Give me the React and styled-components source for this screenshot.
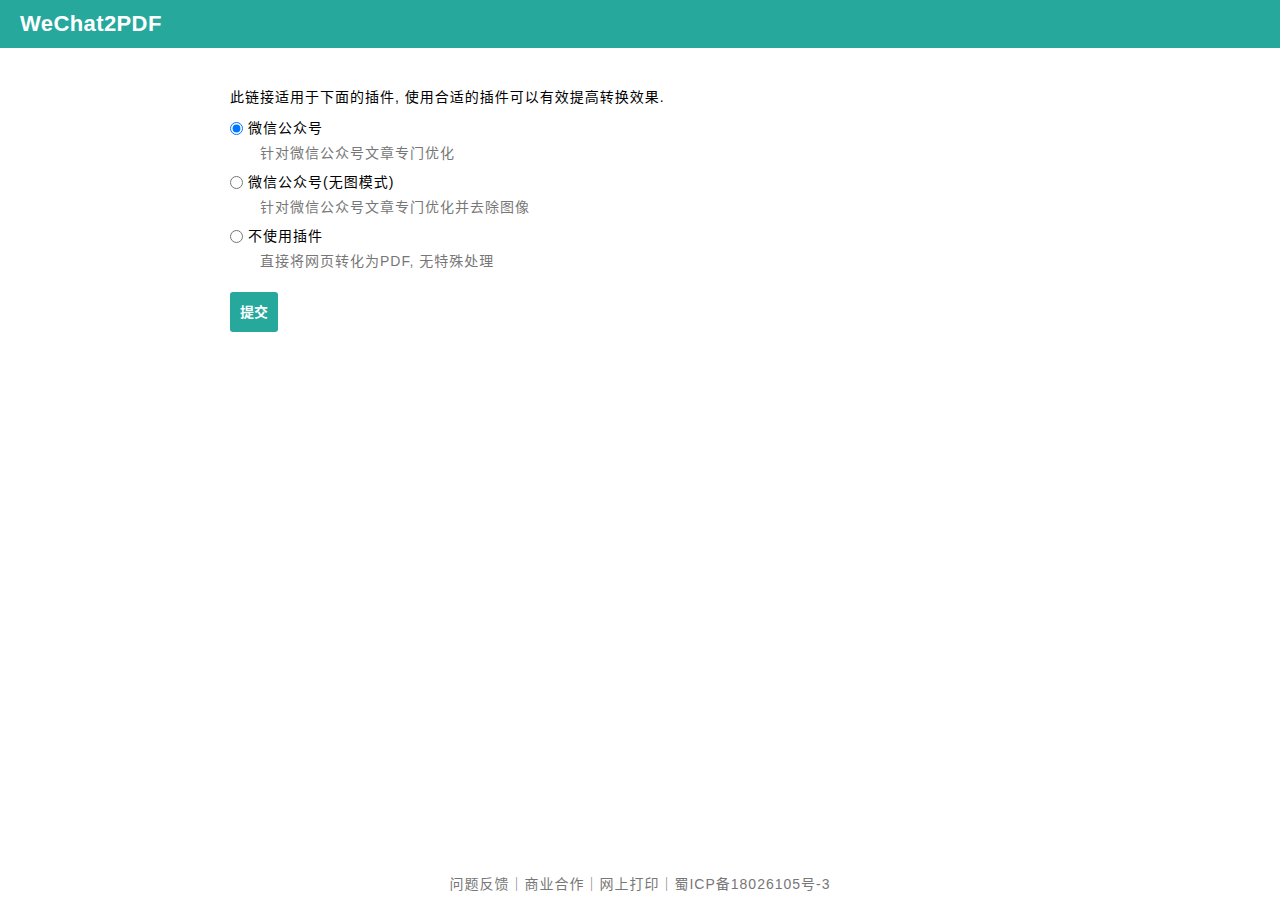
import { useState } from "react";
import styled, { createGlobalStyle } from "styled-components";

const GlobalStyle = createGlobalStyle`
    html, body {
        margin: 0;
        padding: 0;
        background: #fff;
    }
    body {
        font-family: "Liberation Sans", "Noto Sans CJK SC", sans-serif;
        font-size: 14px;
        color: #000;
    }
`;

const Page = styled.div`
    min-height: 100vh;
    display: flex;
    flex-direction: column;
`;

const Header = styled.header`
    height: 48px;
    background-color: #26a89d;
    display: flex;
    align-items: center;
    padding: 0 20px;
`;

const Brand = styled.div`
    color: #fff;
    font-family: "Liberation Sans", sans-serif;
    font-size: 22px;
    font-weight: 700;
    letter-spacing: 0.4px;
`;

const Main = styled.main`
    flex: 1;
    width: 820px;
    margin: 0 auto;
    padding-top: 39px;
`;

const Intro = styled.p`
    margin: 0 0 9px;
    line-height: 20px;
    letter-spacing: 1px;
`;

const Option = styled.div`
    height: 54px;
`;

const OptionLabel = styled.label`
    display: flex;
    align-items: center;
    height: 25px;
    letter-spacing: 1px;
    cursor: pointer;
`;

const LabelText = styled.span`
    padding-bottom: 4px;
`;

const Radio = styled.input`
    width: 13px;
    height: 13px;
    margin: 0 5px 0 0;
`;

const OptionDesc = styled.div`
    padding-left: 30px;
    line-height: 25px;
    color: #777;
    letter-spacing: 1px;
`;

const SubmitButton = styled.button`
    margin-top: 14px;
    height: 40px;
    width: 48px;
    padding: 0 0 2px;
    border: none;
    border-radius: 3px;
    background-color: #26a89d;
    color: #fff;
    font-family: inherit;
    font-size: 14px;
    font-weight: 700;
    cursor: pointer;
`;

const Footer = styled.footer`
    padding: 8px 0 6px;
    line-height: 20px;
    text-align: center;
    color: #777;
    letter-spacing: 1px;
`;

const FooterLink = styled.a`
    color: #777;
    text-decoration: none;
`;

const plugins = [
    { id: "wechat", name: "微信公众号", desc: "针对微信公众号文章专门优化" },
    { id: "wechat-noimg", name: "微信公众号(无图模式)", desc: "针对微信公众号文章专门优化并去除图像" },
    { id: "none", name: "不使用插件", desc: "直接将网页转化为PDF, 无特殊处理" },
];

export default function App() {
    const [plugin, setPlugin] = useState("wechat");

    return (
        <Page>
            <GlobalStyle />
            <Header>
                <Brand>WeChat2PDF</Brand>
            </Header>
            <Main>
                <form onSubmit={(e) => e.preventDefault()}>
                    <Intro>此链接适用于下面的插件, 使用合适的插件可以有效提高转换效果.</Intro>
                    {plugins.map((p) => (
                        <Option key={p.id}>
                            <OptionLabel>
                                <Radio
                                    type="radio"
                                    name="plugin"
                                    value={p.id}
                                    checked={plugin === p.id}
                                    onChange={() => setPlugin(p.id)}
                                />
                                <LabelText>{p.name}</LabelText>
                            </OptionLabel>
                            <OptionDesc>{p.desc}</OptionDesc>
                        </Option>
                    ))}
                    <SubmitButton type="submit">提交</SubmitButton>
                </form>
            </Main>
            <Footer>
                <FooterLink href="#">问题反馈</FooterLink>｜
                <FooterLink href="#">商业合作</FooterLink>｜
                <FooterLink href="#">网上打印</FooterLink>｜
                <FooterLink href="#">蜀ICP备18026105号-3</FooterLink>
            </Footer>
        </Page>
    );
}
